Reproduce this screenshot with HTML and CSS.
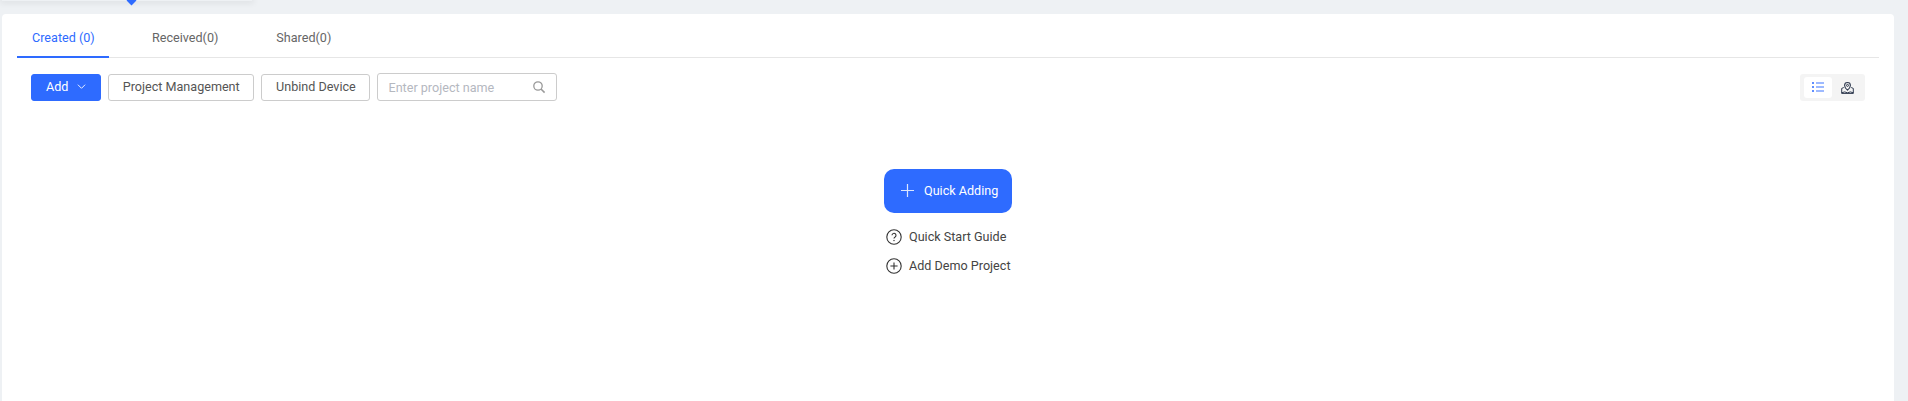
FILE: index.html
```html
<!DOCTYPE html>
<html lang="en">
<head>
<meta charset="utf-8">
<title>Projects</title>
<link rel="stylesheet" href="styles.css">
</head>
<body>
<div class="topbar">
  <div class="menu-shadow"><span class="menu-caret"></span></div>
</div>
<main class="card">
  <nav class="tabs">
    <a class="tab tab-active">Created (0)</a>
    <a class="tab tab-received">Received(0)</a>
    <a class="tab tab-shared">Shared(0)</a>
  </nav>
  <div class="toolbar">
    <button class="btn btn-primary">Add
      <svg class="chev" width="9" height="9" viewBox="0 0 10 10"><path d="M1 3 5 7l4-4" fill="none" stroke="#fff" stroke-width="1"/></svg>
    </button>
    <button class="btn">Project Management</button>
    <button class="btn">Unbind Device</button>
    <div class="search">
      <span class="placeholder">Enter project name</span>
      <svg width="14" height="14" viewBox="0 0 14 14"><circle cx="6" cy="6" r="4.2" fill="none" stroke="#999" stroke-width="1.3"/><path d="m9 9 3.6 3.6" stroke="#999" stroke-width="1.5"/></svg>
    </div>
    <div class="view-switch">
      <span class="view view-active">
        <svg width="12" height="10" viewBox="0 0 12 10"><path d="M0 1h2M0 5h2M0 9h2" stroke="#2e6bff" stroke-width="1.6"/><path d="M4 1h8M4 5h8M4 9h8" stroke="#7fa4ff" stroke-width="1.4"/></svg>
      </span>
      <span class="view">
        <svg width="13" height="13" viewBox="0 0 13 13" fill="none" stroke="#2f3a4f"><path d="M6.5 9.2C4.8 7.6 3.6 6.3 3.6 4.4a2.9 2.9 0 0 1 5.8 0c0 1.9-1.2 3.2-2.9 4.8Z" stroke-width="1.1"/><circle cx="6.5" cy="4.4" r="1" stroke-width="1"/><path d="M2.8 6.5.7 7.4v5h11.6v-5l-2.1-.9M.7 11.8l3-.9 2.8.9 2.8-.9 3 .9" stroke-width="1"/></svg>
      </span>
    </div>
  </div>
  <section class="empty">
    <button class="quick">
      <svg width="13" height="13" viewBox="0 0 13 13"><path d="M6.5 0v13M0 6.5h13" stroke="#dbe6ff" stroke-width="1.2"/></svg>
      <span>Quick Adding</span>
    </button>
    <a class="link">
      <svg width="16" height="16" viewBox="0 0 16 16" fill="none" stroke="#333"><circle cx="8" cy="8" r="7.2" stroke-width="1.1"/><path d="M6 6.3a2 2 0 1 1 3.1 1.7c-.7.4-1.1.8-1.1 1.6" stroke-width="1.1"/><circle cx="8" cy="11.6" r=".4" stroke-width=".8"/></svg>
      <span>Quick Start Guide</span>
    </a>
    <a class="link">
      <svg width="16" height="16" viewBox="0 0 16 16" fill="none" stroke="#333"><circle cx="8" cy="8" r="7.2" stroke-width="1.1"/><path d="M8 4.4v7.2M4.4 8h7.2" stroke-width="1.1"/></svg>
      <span>Add Demo Project</span>
    </a>
  </section>
</main>
</body>
</html>
```
FILE: styles.css
```css
* { box-sizing: border-box; }
html, body { margin: 0; height: 100%; }
body {
  background: #eef1f4;
  font-family: Roboto, "Liberation Sans", sans-serif;
  font-size: 12.6px;
  color: #555;
  overflow: hidden;
  display: flex;
  flex-direction: column;
  padding: 0 14px 0 2px;
}
.topbar { height: 14px; flex: none; }
.menu-shadow {
  width: 250px;
  height: 1px;
  box-shadow: 0 0 6px 2px rgba(0,0,0,.08);
  position: relative;
}
.menu-caret {
  position: absolute;
  left: 125.5px;
  top: -3.5px;
  width: 7px;
  height: 7px;
  background: #2e6bff;
  transform: rotate(45deg);
}
.card {
  flex: 1;
  background: #fff;
  border-radius: 4px 4px 0 0;
  padding: 0 15px;
}
.tabs {
  display: flex;
  height: 44px;
  border-bottom: 1px solid #e6e6e6;
}
.tab { display: block; line-height: 47px; height: 44px; padding: 0 15px; color: #666; white-space: nowrap; }
.tab-active { width: 92px; color: #2e6bff; border-bottom: 2px solid #2e6bff; }
.tab-received { margin-left: 28px; }
.tab-shared { margin-left: 28px; }
.toolbar {
  display: flex;
  align-items: center;
  gap: 7px;
  padding: 15px 14px 0;
}
.btn {
  height: 27px;
  padding: 0 13.7px 2px;
  font: 12.6px Roboto, sans-serif;
  color: #555;
  background: #fff;
  border: 1px solid #ccc;
  border-radius: 3px;
  white-space: nowrap;
}
.btn-primary {
  width: 70px;
  background: #2e6bff;
  border-color: #2e6bff;
  color: #fff;
  display: flex;
  align-items: center;
  padding: 0 0 2px 14px;
  gap: 9px;
}
.search {
  width: 180px;
  height: 28px;
  border: 1px solid #ccc;
  border-radius: 3px;
  display: flex;
  align-items: center;
  justify-content: space-between;
  padding: 0 10px;
}
.placeholder { color: #b5b8bf; }
.view-switch {
  margin-left: auto;
  width: 65px;
  height: 27px;
  background: #f4f4f4;
  border-radius: 3px;
  display: flex;
  align-items: center;
  padding: 3px 4px;
}
.view { width: 28px; height: 21px; display: flex; align-items: center; justify-content: center; border-radius: 3px; }
.view + .view { margin-left: 1px; }
.view-active { background: #fff; }
.empty {
  display: flex;
  flex-direction: column;
  align-items: flex-start;
  width: 128px;
  margin: 68px auto 0;
}
.quick {
  width: 128px;
  height: 44px;
  background: #2e6bff;
  border: 0;
  border-radius: 10px;
  color: #fff;
  font: 12.6px Roboto, sans-serif;
  display: flex;
  align-items: center;
  gap: 10px;
  padding: 0 0 2px 17px;
  margin-bottom: 9px;
}
.link {
  display: flex;
  align-items: center;
  gap: 7px;
  height: 29px;
  padding-left: 2px;
  color: #444;
  white-space: nowrap;
}
```
